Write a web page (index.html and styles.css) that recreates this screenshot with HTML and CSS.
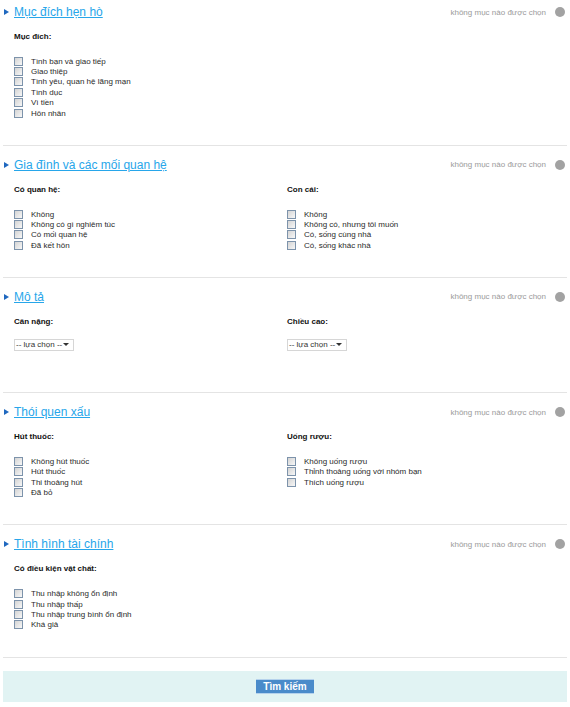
FILE: index.html
```html
<!DOCTYPE html>
<html lang="vi">
<head>
<meta charset="UTF-8">
<title>Tìm kiếm</title>
<link rel="stylesheet" href="styles.css">
</head>
<body>
<div class="page">

<section class="group first">
<div class="group-head">
<a href="#" class="group-title"><span class="arrow"></span><span class="title-text">Mục đích hẹn hò</span></a>
<span class="status">không mục nào được chọn<span class="dot"></span></span>
</div>
<div class="cols">
<div class="col">
<div class="field-label">Mục đích:</div>
<ul class="checks">
<li><input type="checkbox"><span>Tình bạn và giao tiếp</span></li>
<li><input type="checkbox"><span>Giao thiệp</span></li>
<li><input type="checkbox"><span>Tình yêu, quan hệ lãng mạn</span></li>
<li><input type="checkbox"><span>Tình dục</span></li>
<li><input type="checkbox"><span>Vì tiền</span></li>
<li><input type="checkbox"><span>Hôn nhân</span></li>
</ul>
</div>
</div>
</section>

<section class="group">
<div class="group-head">
<a href="#" class="group-title"><span class="arrow"></span><span class="title-text">Gia đình và các mối quan hệ</span></a>
<span class="status">không mục nào được chọn<span class="dot"></span></span>
</div>
<div class="cols">
<div class="col">
<div class="field-label">Có quan hệ:</div>
<ul class="checks">
<li><input type="checkbox"><span>Không</span></li>
<li><input type="checkbox"><span>Không có gì nghiêm túc</span></li>
<li><input type="checkbox"><span>Có mối quan hệ</span></li>
<li><input type="checkbox"><span>Đã kết hôn</span></li>
</ul>
</div>
<div class="col">
<div class="field-label">Con cái:</div>
<ul class="checks">
<li><input type="checkbox"><span>Không</span></li>
<li><input type="checkbox"><span>Không có, nhưng tôi muốn</span></li>
<li><input type="checkbox"><span>Có, sống cùng nhà</span></li>
<li><input type="checkbox"><span>Có, sống khác nhà</span></li>
</ul>
</div>
</div>
</section>

<section class="group">
<div class="group-head">
<a href="#" class="group-title"><span class="arrow"></span><span class="title-text">Mô tả</span></a>
<span class="status">không mục nào được chọn<span class="dot"></span></span>
</div>
<div class="cols">
<div class="col">
<div class="field-label">Cân nặng:</div>
<div class="select-box"><span>-- lựa chọn --</span><span class="caret"></span></div>
</div>
<div class="col">
<div class="field-label">Chiều cao:</div>
<div class="select-box"><span>-- lựa chọn --</span><span class="caret"></span></div>
</div>
</div>
</section>

<section class="group">
<div class="group-head">
<a href="#" class="group-title"><span class="arrow"></span><span class="title-text">Thói quen xấu</span></a>
<span class="status">không mục nào được chọn<span class="dot"></span></span>
</div>
<div class="cols">
<div class="col">
<div class="field-label">Hút thuốc:</div>
<ul class="checks">
<li><input type="checkbox"><span>Không hút thuốc</span></li>
<li><input type="checkbox"><span>Hút thuốc</span></li>
<li><input type="checkbox"><span>Thi thoảng hút</span></li>
<li><input type="checkbox"><span>Đã bỏ</span></li>
</ul>
</div>
<div class="col">
<div class="field-label">Uống rượu:</div>
<ul class="checks">
<li><input type="checkbox"><span>Không uống rượu</span></li>
<li><input type="checkbox"><span>Thỉnh thoảng uống với nhóm bạn</span></li>
<li><input type="checkbox"><span>Thích uống rượu</span></li>
</ul>
</div>
</div>
</section>

<section class="group">
<div class="group-head">
<a href="#" class="group-title"><span class="arrow"></span><span class="title-text">Tình hình tài chính</span></a>
<span class="status">không mục nào được chọn<span class="dot"></span></span>
</div>
<div class="cols">
<div class="col">
<div class="field-label">Có điều kiện vật chất:</div>
<ul class="checks">
<li><input type="checkbox"><span>Thu nhập không ổn định</span></li>
<li><input type="checkbox"><span>Thu nhập thấp</span></li>
<li><input type="checkbox"><span>Thu nhập trung bình ổn định</span></li>
<li><input type="checkbox"><span>Khá giả</span></li>
</ul>
</div>
</div>
</section>

<div class="search-bar">
<button type="submit" class="search-btn">Tìm kiếm</button>
</div>

</div>
</body>
</html>
```

FILE: styles.css
```css
body {
margin: 0;
font-family: "Liberation Sans", Arial, sans-serif;
font-size: 8px;
color: #2a2a2a;
background: #fff;
}
.page {
margin: 0 3px;
}
.group {
border-bottom: 1px solid #e4e4e4;
padding: 11px 0 26.5px;
}
.group.first {
padding-top: 4px;
}
.group-head {
display: flex;
align-items: center;
justify-content: space-between;
height: 16px;
}
.group-title {
display: flex;
align-items: center;
text-decoration: none;
}
.arrow {
width: 0;
height: 0;
border-left: 5px solid #1f68bf;
border-top: 3.5px solid transparent;
border-bottom: 3.5px solid transparent;
margin-left: 1px;
margin-right: 5px;
}
.title-text {
font-size: 12px;
line-height: 16px;
color: #27a6ea;
text-decoration: underline;
}
.status {
display: flex;
align-items: center;
color: #9a9a9a;
font-size: 8px;
}
.dot {
width: 10px;
height: 10px;
border-radius: 50%;
background: #a2a2a2;
margin-left: 9px;
margin-right: 2px;
}
.cols {
display: grid;
grid-template-columns: 273px 1fr;
padding-left: 11px;
}
.field-label {
font-weight: bold;
color: #111;
line-height: 12px;
margin-top: 11px;
}
.checks {
list-style: none;
margin: 13px 0 0;
padding: 0;
}
.checks li {
display: flex;
align-items: center;
height: 10.4px;
}
.checks input {
-webkit-appearance: none;
appearance: none;
width: 9px;
height: 9px;
margin: 0 8px 0 0;
border: 1px solid #7d93ab;
background: linear-gradient(135deg, #d4d4d4, #f7f7f7);
}
.select-box {
display: flex;
align-items: center;
justify-content: space-between;
box-sizing: border-box;
width: 60px;
height: 12px;
margin: 11px 0 15px;
border: 1px solid #d6d6d6;
padding: 0 4px 0 1px;
color: #333;
}
.caret {
width: 0;
height: 0;
border-top: 3px solid #333;
border-left: 3px solid transparent;
border-right: 3px solid transparent;
}
.search-bar {
margin-top: 13px;
background: #e1f3f3;
height: 31px;
display: flex;
justify-content: center;
align-items: center;
}
.search-btn {
font-family: "Liberation Sans", Arial, sans-serif;
font-size: 10px;
font-weight: bold;
color: #fff;
background: #4a8bca;
border: none;
border-top: 1px solid #b5d2ec;
border-bottom: 1px solid #b5d2ec;
width: 58px;
height: 15px;
padding: 0;
cursor: pointer;
}
```
